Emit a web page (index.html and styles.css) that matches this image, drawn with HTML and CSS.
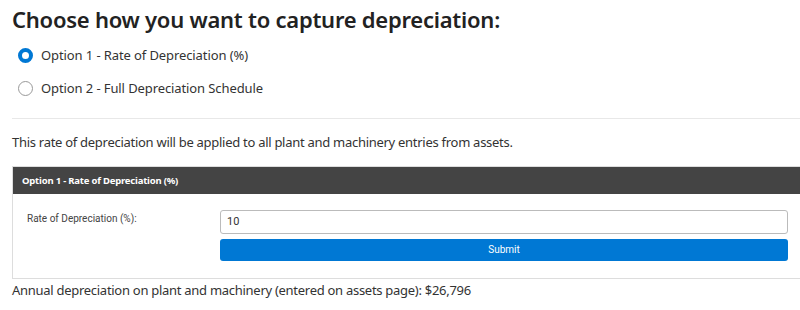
FILE: index.html
```html
<!DOCTYPE html>
<html>
<head>
<meta charset="utf-8">
<link rel="stylesheet" href="styles.css">
</head>
<body>
<div class="page">
  <h1 class="title">Choose how you want to capture depreciation:</h1>
  <div class="options">
    <label class="option"><span class="radio radio-on"></span><span class="option-text">Option 1 - Rate of Depreciation (%)</span></label>
    <label class="option"><span class="radio"></span><span class="option-text">Option 2 - Full Depreciation Schedule</span></label>
  </div>
  <hr class="rule">
  <p class="note">This rate of depreciation will be applied to all plant and machinery entries from assets.</p>
  <div class="panel">
    <div class="panel-head">Option 1 - Rate of Depreciation (%)</div>
    <div class="panel-body">
      <div class="field-label">Rate of Depreciation (%):</div>
      <div class="field-controls">
        <div class="input">10</div>
        <div class="button">Submit</div>
      </div>
    </div>
  </div>
  <p class="result">Annual depreciation on plant and machinery (entered on assets page): $26,796</p>
</div>
</body>
</html>
```
FILE: styles.css
```css
html, body {
  margin: 0;
  padding: 0;
  background: #fff;
  overflow: hidden;
}
.page {
  padding-left: 12px;
  font-family: "Noto Sans", "Open Sans", sans-serif;
  color: #333;
}
.title {
  margin: 0;
  padding-top: 3px;
  font-size: 22px;
  letter-spacing: -0.25px;
  font-weight: 600;
  line-height: 32px;
  color: #222;
}
.options {
  display: flex;
  flex-direction: column;
  gap: 9px;
  padding-top: 8px;
  padding-left: 6px;
}
.option {
  display: flex;
  align-items: center;
  gap: 8px;
  height: 24px;
  font-size: 13px;
  letter-spacing: -0.1px;
  color: #333;
}
.radio {
  box-sizing: border-box;
  width: 15px;
  height: 15px;
  border-radius: 50%;
  border: 1px solid #999;
  background: #fff;
}
.radio-on {
  border: 4px solid #0078d4;
}
.rule {
  margin: 18px 0 0 0;
  border: 0;
  border-top: 1px solid #e8e8e8;
}
.note {
  margin: 13px 0 0 0;
  font-size: 13px;
  letter-spacing: -0.28px;
  line-height: 20px;
  color: #333;
}
.panel {
  margin-top: 14px;
  border: 1px solid #ddd;
  border-right: 0;
}
.panel-head {
  background: #444;
  color: #fff;
  font-size: 9.5px;
  letter-spacing: -0.2px;
  font-weight: 700;
  height: 27px;
  line-height: 27px;
  padding-left: 9px;
}
.panel-body {
  display: flex;
  padding: 16px 12px 17px 14px;
}
.field-label {
  width: 193px;
  font-family: "Roboto", "Liberation Sans", sans-serif;
  font-size: 10px;
  line-height: 16px;
  color: #444;
  padding-top: 1px;
}
.field-controls {
  flex: 1;
  display: flex;
  flex-direction: column;
  gap: 5px;
}
.input {
  box-sizing: border-box;
  height: 24px;
  border: 1px solid #bbb;
  border-radius: 3px;
  padding-left: 6px;
  font-family: "Roboto", "Liberation Sans", sans-serif;
  font-size: 11px;
  line-height: 22px;
  color: #333;
}
.button {
  height: 22px;
  line-height: 22px;
  border-radius: 3px;
  background: #0078d4;
  color: #fff;
  text-align: center;
  font-family: "Roboto", "Liberation Sans", sans-serif;
  font-size: 10px;
}
.result {
  margin: 1px 0 0 0;
  font-size: 13px;
  letter-spacing: -0.28px;
  line-height: 20px;
  color: #333;
}
```
